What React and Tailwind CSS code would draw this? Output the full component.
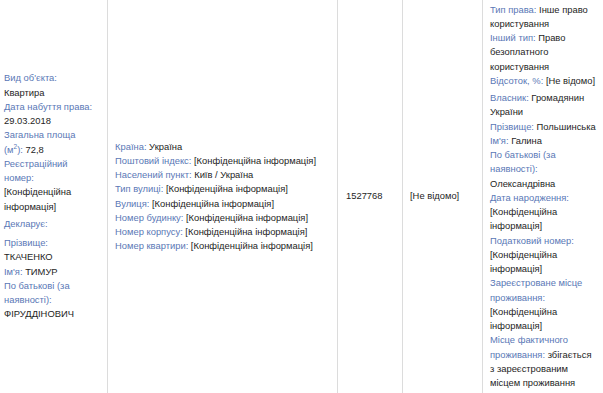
import React from "react";

const L = ({ children }) => <span className="text-[#5a78b6]">{children}</span>;

function Field({ label, children, className = "" }) {
  return (
    <div className={className}>
      <L>{label}</L> {children}
    </div>
  );
}

export default function App() {
  const conf = "[Конфіденційна інформація]";

  return (
    <div
      className="w-[603px] h-[393px] overflow-hidden bg-white text-[#1e1e1e] text-[9.4px] leading-[14.25px]"
      style={{ fontFamily: '"Liberation Sans", Arial, sans-serif' }}
    >
      <div className="flex h-[393px] items-stretch">
        {/* object */}
        <div className="w-[108px] shrink-0 border-r border-[#dcdcdc] pl-[4px] pr-[11px] flex flex-col justify-center">
          <div className="mb-[3px]">
            <div><L>Вид об'єкта:</L></div>
            <div>Квартира</div>
            <div><L>Дата набуття права:</L></div>
            <div>29.03.2018</div>
            <div>
              <L>
                Загальна площа (м<span className="relative -top-[4px] text-[6.5px] leading-none">2</span>):
              </L>{" "}
              72,8
            </div>
            <div><L>Реєстраційний номер:</L></div>
            <div>{conf}</div>
          </div>
          <div className="mb-[5px]"><L>Декларує:</L></div>
          <div>
            <div><L>Прізвище:</L></div>
            <div>ТКАЧЕНКО</div>
            <Field label="Ім'я:">ТИМУР</Field>
            <div><L>По батькові (за наявності):</L></div>
            <div>ФІРУДДІНОВИЧ</div>
          </div>
        </div>

        {/* address */}
        <div className="w-[230px] shrink-0 border-r border-[#dcdcdc] px-[7px] flex flex-col justify-center">
          <Field label="Країна:">Україна</Field>
          <Field label="Поштовий індекс:">{conf}</Field>
          <Field label="Населений пункт:">Київ / Україна</Field>
          <Field label="Тип вулиці:">{conf}</Field>
          <Field label="Вулиця:">{conf}</Field>
          <Field label="Номер будинку:">{conf}</Field>
          <Field label="Номер корпусу:">{conf}</Field>
          <Field label="Номер квартири:">{conf}</Field>
        </div>

        {/* value */}
        <div className="w-[65px] shrink-0 border-r border-[#dcdcdc] px-[8px] flex items-center">
          1527768
        </div>

        <div className="w-[80px] shrink-0 border-r border-[#dcdcdc] px-[7px] flex items-center">
          [Не відомо]
        </div>

        {/* rights */}
        <div className="w-[120px] shrink-0 pl-[7px] pr-[7px] flex flex-col justify-center">
          <div className="mb-[3px]">
            <Field label="Тип права:">Інше право користування</Field>
            <Field label="Інший тип:">Право безоплатного користування</Field>
            <Field label="Відсоток, %:">[Не відомо]</Field>
          </div>
          <div>
            <Field label="Власник:">Громадянин України</Field>
            <Field label="Прізвище:">Польшинська</Field>
            <Field label="Ім'я:">Галина</Field>
            <div><L>По батькові (за наявності):</L></div>
            <div>Олександрівна</div>
            <div><L>Дата народження:</L></div>
            <div>{conf}</div>
            <div><L>Податковий номер:</L></div>
            <div>{conf}</div>
            <div><L>Зареєстроване місце проживання:</L></div>
            <div>{conf}</div>
            <Field label="Місце фактичного проживання:">
              збігається з зареєстрованим<br />місцем проживання
            </Field>
          </div>
        </div>
      </div>
    </div>
  );
}
